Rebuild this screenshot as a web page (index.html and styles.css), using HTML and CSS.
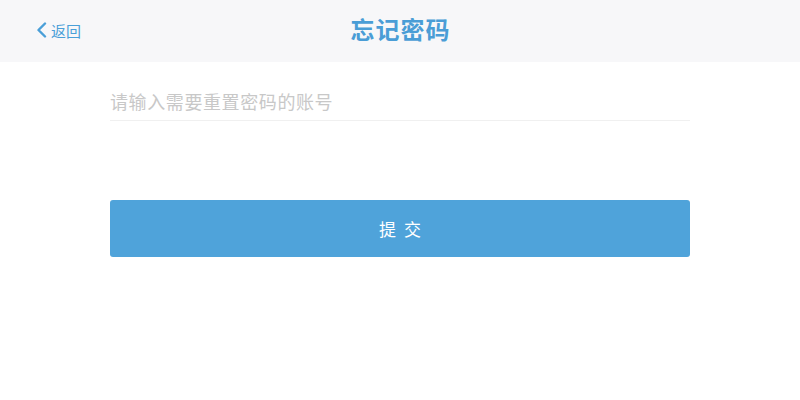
FILE: index.html
```html
<!DOCTYPE html>
<html lang="zh-CN">
<head>
<meta charset="utf-8">
<title>忘记密码</title>
<link rel="stylesheet" href="styles.css">
</head>
<body>
<header class="topbar">
  <a class="back" href="#">
    <svg class="back-icon" width="11" height="16" viewBox="0 0 11 16"><path d="M9 1.5 L2.5 8 L9 14.5" fill="none" stroke="#4a9fd8" stroke-width="2.4" stroke-linecap="round" stroke-linejoin="round"/></svg>
    <span>返回</span>
  </a>
  <h1 class="title">忘记密码</h1>
  <div class="spacer"></div>
</header>
<main class="content">
  <div class="field">
    <input class="account" type="text" placeholder="请输入需要重置密码的账号">
  </div>
  <button class="submit" type="button">提交</button>
</main>
</body>
</html>
```
FILE: styles.css
```css
html, body {
  margin: 0;
  padding: 0;
  background: #ffffff;
  font-family: "Noto Sans CJK SC", "Noto Sans", sans-serif;
}
.topbar {
  height: 62px;
  background: #f7f7f9;
  display: grid;
  grid-template-columns: 1fr auto 1fr;
  align-items: center;
  padding: 0 36px;
  box-sizing: border-box;
}
.back {
  display: flex;
  align-items: center;
  gap: 4px;
  color: #4a9fd8;
  text-decoration: none;
  font-size: 15px;
  justify-self: start;
  margin-top: -2px;
}
.back-icon { display: block; }
.title {
  margin: 0;
  font-size: 24px;
  font-weight: 700;
  color: #4a9dd6;
  letter-spacing: 1px;
  text-indent: 1px;
  margin-top: -6px;
}
.content {
  padding: 0 110px;
  display: flex;
  flex-direction: column;
}
.field {
  box-sizing: border-box;
  height: 59px;
  border-bottom: 1px solid #f0f0f0;
  display: flex;
  align-items: flex-end;
  padding-bottom: 6px;
}
.account {
  border: none;
  outline: none;
  padding: 0;
  width: 100%;
  font-family: inherit;
  font-size: 18px;
  line-height: 26px;
  letter-spacing: 0.6px;
  color: #333;
  background: transparent;
}
.account::placeholder { color: #c8c8c8; }
.submit {
  margin-top: 79px;
  height: 57px;
  border: none;
  border-radius: 3px;
  background: #4fa3da;
  color: #ffffff;
  font-family: inherit;
  font-size: 17px;
  letter-spacing: 8px;
  text-indent: 8px;
  cursor: pointer;
}
```
